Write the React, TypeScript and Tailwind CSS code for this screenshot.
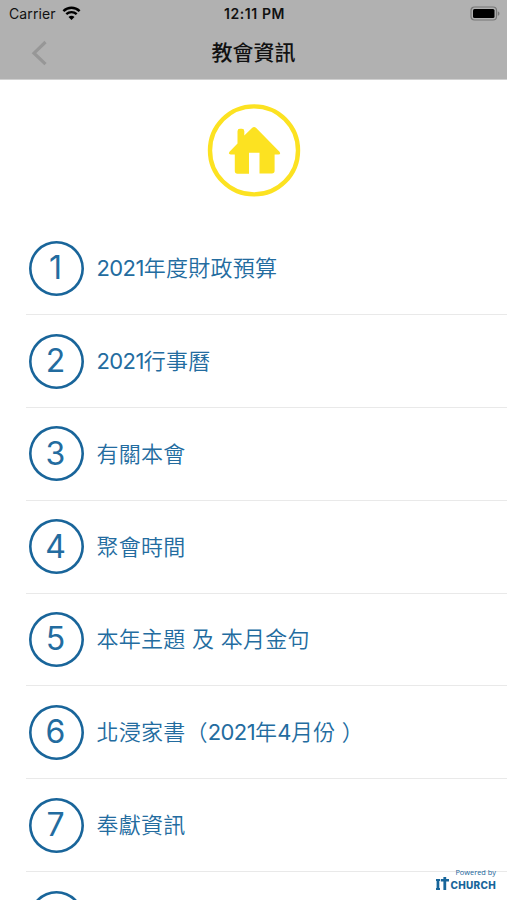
const ITEMS = [
  '2021年度財政預算',
  '2021行事曆',
  '有關本會',
  '聚會時間',
  '本年主題 及 本月金句',
  '北浸家書（2021年4月份 ）',
  '奉獻資訊',
];

function StatusBar() {
  return (
    <div className="grid h-[26px] grid-cols-3 items-center pl-[9px] pr-[7px] text-[#111]">
      <div className="flex items-center gap-[6px] text-[14px] tracking-[0.1px]">
        <span>Carrier</span>
        <svg width="19" height="15" viewBox="0 0 19 15" fill="none">
          <path d="M1.4 5.1C6 .7 13 .7 17.6 5.1" stroke="#000" strokeWidth="2.5" />
          <path d="M4.3 8.2c3-2.8 7.4-2.8 10.4 0" stroke="#000" strokeWidth="2.4" />
          <path d="M6.5 10.9c1.7-1.6 4.3-1.6 6 0l-3 3.1z" fill="#000" />
        </svg>
      </div>
      <span className="text-center text-[14px] font-semibold tracking-[0.6px]">12:11 PM</span>
      <svg className="justify-self-end" width="30" height="15" viewBox="0 0 30 15">
        <rect x="1" y="1" width="25.5" height="13" rx="3.5" fill="none" stroke="#777" strokeWidth="1.2" />
        <rect x="3" y="3" width="21.5" height="9" rx="1.5" fill="#000" />
        <path d="M27.8 5.2c2.2.8 2.2 3.8 0 4.6z" fill="#777" />
      </svg>
    </div>
  );
}

function NavBar() {
  return (
    <div className="grid flex-1 grid-cols-[1fr_auto_1fr] items-center">
      <svg className="ml-[31px]" width="18" height="26" viewBox="0 0 18 26" fill="none">
        <path d="M14.5 2 3 13.2 14.5 24.2" stroke="#979797" strokeWidth="3.2" />
      </svg>
      <h1 className="text-[21px] font-medium leading-none text-[#111]">教會資訊</h1>
    </div>
  );
}

function HomeBadge() {
  return (
    <svg width="94" height="94" viewBox="0 0 94 94">
      <circle cx="47" cy="47.4" r="44" fill="none" stroke="#fce221" strokeWidth="4.4" />
      <path
        d="M30.5 40.5V28.2q0-2.4 2.4-2.4h2q2.4 0 2.4 2.4v4.3l7.7-7.6q2.1-1.9 4.2 0l23.3 23.9q1.7 2.7-1.1 2.7h-3.8v16.2q0 2.7-2.7 2.7H52.5V49.7H42v21H30.5q-2.7 0-2.7-2.7V51.5h-4.1q-2.9-.1-1.2-2.8z"
        fill="#fce221"
      />
    </svg>
  );
}

function Circle({ index }: { index?: number }) {
  return (
    <span className="flex size-[55px] shrink-0 items-center justify-center rounded-full pr-[2px] text-[32px] leading-none shadow-[inset_0_0_0_2.6px_#19659a]">
      {index}
    </span>
  );
}

function Label({ text }: { text: string }) {
  return (
    <span className="ml-[12.5px] whitespace-pre text-[22px] font-[350] leading-none tracking-[0.25px]">
      {text.split(/(\d+)/).map((part, i) =>
        /^\d/.test(part) ? (
          <span key={i} className="font-normal tracking-[-0.6px]">{part}</span>
        ) : (
          part
        ),
      )}
    </span>
  );
}

function Row({ index, label }: { index: number; label: string }) {
  return (
    <li className="ml-[26px] flex h-[92.8px] shrink-0 items-center border-b border-[#e9e9e9] pl-[3px] text-[#236c9f]">
      <Circle index={index} />
      <Label text={label} />
    </li>
  );
}

function PoweredBy() {
  return (
    <div className="absolute bottom-[10px] right-[11px] flex flex-col items-end text-[#17659a]">
      <span className="font-['Open_Sans'] text-[7.4px] leading-[9px]">Powered by</span>
      <div className="flex h-[13px] items-end gap-px">
        <svg width="13" height="13" viewBox="0 0 13 13" fill="currentColor">
          <path d="M0 2h4v2H3.3v7H4v2H0v-2h.6V4H0zM7.4 0h2.8v2H13v2.6h-2.8V13H7.4V4.6H4.8V2h2.6z" />
        </svg>
        <span className="text-[10px] font-extrabold leading-[9px] tracking-[0.3px]">CHURCH</span>
      </div>
    </div>
  );
}

export default function App() {
  return (
    <div className="relative flex h-[900px] w-[507px] flex-col overflow-hidden bg-white font-[Inter,'Noto_Sans_CJK_TC',sans-serif]">
      <header className="flex h-20 shrink-0 flex-col border-b border-[#d0d0d0] bg-[#b1b1b1]">
        <StatusBar />
        <NavBar />
      </header>
      <main className="flex flex-col">
        <div className="flex h-[142.4px] shrink-0 justify-center pt-[23px]">
          <HomeBadge />
        </div>
        <ul className="flex flex-col">
          {ITEMS.map((label, i) => (
            <Row key={label} index={i + 1} label={label} />
          ))}
          <li className="ml-[26px] flex h-[92.8px] shrink-0 items-center pl-[3px]">
            <Circle />
          </li>
        </ul>
      </main>
      <PoweredBy />
    </div>
  );
}
